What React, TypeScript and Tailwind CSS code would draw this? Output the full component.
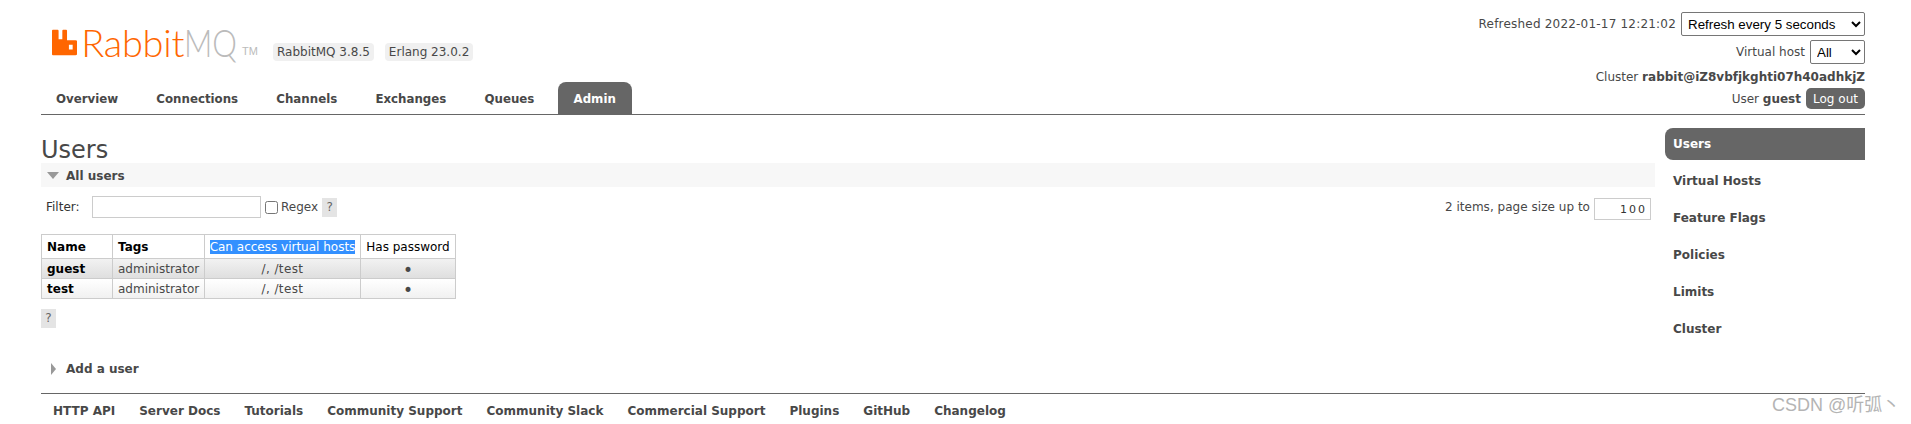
import React from 'react';

const tabs = ['Overview', 'Connections', 'Channels', 'Exchanges', 'Queues'];
const side = ['Virtual Hosts', 'Feature Flags', 'Policies', 'Limits', 'Cluster'];
const footer = ['HTTP API', 'Server Docs', 'Tutorials', 'Community Support', 'Community Slack', 'Commercial Support', 'Plugins', 'GitHub', 'Changelog'];

const Help = () => (
  <span className="inline-block w-[15px] h-[19px] bg-[#e4e4e4] text-center leading-[19px] text-[#666]">?</span>
);

const Logo = () => (
  <div className="flex items-end w-[206px]">
    <svg width="27" height="27" viewBox="0 0 27 27" className="mb-[1px]">
      <path
        fillRule="evenodd"
        fill="#ff6600"
        d="M0 1 Q0 0 1 0 H6 Q7 0 7 1 V10 H11 V1 Q11 0 12 0 H15 Q16 0 16 1 V11 H25 Q27 11 27 13 V25 Q27 27 25 27 H1 Q0 27 0 26 Z M18 16 V21 H22 V16 Z"
      />
    </svg>
    <span className="ml-[4px] text-[38px] leading-[30px] font-light tracking-[-0.3px] text-[#ff6600] font-['Lato',sans-serif]">Rabbit</span>
    <span className="inline-block w-[56px] origin-left scale-x-[0.82] text-[38px] leading-[30px] font-light text-[#bbbbbb] font-['Lato',sans-serif]">MQ</span>
    <span className="ml-[2px] mb-[1px] text-[11px] leading-[10px] text-[#bbbbbb] font-['Liberation_Sans',sans-serif]">TM</span>
  </div>
);

export default function App() {
  return (
    <div className="relative w-[1911px] h-[424px] overflow-hidden bg-white text-[12px] text-[#484848] font-['DejaVu_Sans',sans-serif]">
      {/* header */}
      <header className="ml-[41px] mr-[46px] h-[115px] border-b border-[#666] flex justify-between">
        <div className="flex flex-col">
          <div className="flex items-end mt-[27px] ml-[11px]">
            <Logo />
            <div className="flex gap-[11px] ml-[15px] mb-[-4px]">
              <span className="bg-[#f0f0f0] rounded-[4px] px-[4px] h-[18px] leading-[18px]">RabbitMQ 3.8.5</span>
              <span className="bg-[#f0f0f0] rounded-[4px] px-[4px] h-[18px] leading-[18px]">Erlang 23.0.2</span>
            </div>
          </div>
          <nav className="flex mt-auto font-bold text-[11.8px]">
            {tabs.map((t) => (
              <a key={t} className="px-[15px] mr-[8.2px] h-[32px] leading-[35px]">{t}</a>
            ))}
            <a className="px-[16px] h-[32px] leading-[35px] bg-[#666] text-white rounded-t-[8px]">Admin</a>
          </nav>
        </div>
        <div className="flex flex-col items-end pt-[12px]">
          <div className="flex items-center gap-[5px] h-[24px]">
            <span className="tracking-[0.2px]">Refreshed 2022-01-17 12:21:02</span>
            <select defaultValue="5" className="w-[184px] h-[24px] border border-[#767676] rounded-[2px] text-[13.33px] text-black pl-[2px] font-['Liberation_Sans',sans-serif]">
              <option value="5">Refresh every 5 seconds</option>
            </select>
          </div>
          <div className="flex items-center gap-[5px] h-[24px] mt-[4px]">
            <span>Virtual host</span>
            <select defaultValue="all" className="w-[55px] h-[24px] border border-[#767676] rounded-[2px] text-[13.33px] text-black pl-[2px] font-['Liberation_Sans',sans-serif]">
              <option value="all">All</option>
            </select>
          </div>
          <div className="mt-[5px] h-[16px] leading-[16px]">
            Cluster <b>rabbit@iZ8vbfjkghti07h40adhkjZ</b>
          </div>
          <div className="flex items-center gap-[5px] mt-[3px]">
            <span>User <b>guest</b></span>
            <button className="w-[59px] h-[21px] bg-[#666] text-white rounded-[5px] text-[12px]">Log out</button>
          </div>
        </div>
      </header>

      {/* main */}
      <div className="ml-[41px] mr-[46px] h-[278px] flex gap-[10px]">
        <main className="w-[1614px]">
          <h1 className="mt-[22px] text-[24px] leading-[26px] text-[#484848]">Users</h1>
          <div className="h-[24px] pt-[1px] bg-[#f7f7f7] flex items-center font-bold">
            <span className="ml-[6px] mr-[7px] w-0 h-0 border-x-[6px] border-x-transparent border-t-[7px] border-t-[#999]" />
            All users
          </div>
          <div className="flex items-center h-[22px] mt-[9px]">
            <span className="ml-[5px] w-[46px] text-[#333]">Filter:</span>
            <input className="w-[169px] h-[22px] border border-[#ccc] outline-none" />
            <input type="checkbox" className="ml-[4px] w-[13px] h-[13px]" />
            <span className="ml-[3px]">Regex</span>
            <span className="ml-[4px] flex"><Help /></span>
            <span className="ml-auto mr-[4px] tracking-[0.03px]">2 items, page size up to</span>
            <input defaultValue="100" className="w-[57px] h-[22px] mt-[4px] mr-[4px] border border-[#ccc] text-right pr-[3px] text-[11px] tracking-[2px] text-[#333] outline-none" />
          </div>
          <table className="mt-[16px] border-collapse text-center">
            <thead>
              <tr className="h-[24px] text-black">
                <th className="w-[71px] border border-[#ccc] text-left pl-[5px]">Name</th>
                <th className="w-[92px] border border-[#ccc] text-left pl-[5px]">Tags</th>
                <th className="w-[156px] border border-[#ccc] font-normal">
                  <span className="bg-[#3390ff] text-white">Can access virtual hosts</span>
                </th>
                <th className="w-[95px] border border-[#ccc] font-normal">Has password</th>
              </tr>
            </thead>
            <tbody>
              <tr className="h-[20px] bg-gradient-to-b from-[#f2f2f2] to-[#dedede]">
                <td className="border border-[#ccc] text-left pl-[5px] font-bold text-black">guest</td>
                <td className="border border-[#ccc] text-left pl-[5px]">administrator</td>
                <td className="border border-[#ccc] tracking-[0.4px]">/, /test</td>
                <td className="border border-[#ccc] text-[17px] leading-[15px] pt-[3px]">•</td>
              </tr>
              <tr className="h-[20px] bg-gradient-to-b from-white to-[#f0f0f0]">
                <td className="border border-[#ccc] text-left pl-[5px] font-bold text-black">test</td>
                <td className="border border-[#ccc] text-left pl-[5px]">administrator</td>
                <td className="border border-[#ccc] tracking-[0.4px]">/, /test</td>
                <td className="border border-[#ccc] text-[17px] leading-[15px] pt-[3px]">•</td>
              </tr>
            </tbody>
          </table>
          <div className="mt-[10px] h-[20px]"><Help /></div>
          <div className="mt-[31px] flex items-center font-bold">
            <span className="ml-[10px] mr-[10px] w-0 h-0 border-y-[6px] border-y-transparent border-l-[5px] border-l-[#999]" />
            Add a user
          </div>
        </main>
        <aside className="w-[200px] mt-[13px] font-bold">
          <div className="h-[32px] leading-[32px] pl-[8px] bg-[#666] text-white rounded-l-[8px]">Users</div>
          <div className="flex flex-col mt-[13px] gap-[21px] pl-[8px]">
            {side.map((s) => (
              <a key={s} className="h-[16px] leading-[16px]">{s}</a>
            ))}
          </div>
        </aside>
      </div>

      {/* footer */}
      <footer className="ml-[41px] mr-[46px] border-t border-[#666] flex gap-[24px] pl-[12px] pt-[8px] font-bold">
        {footer.map((f) => (
          <a key={f}>{f}</a>
        ))}
      </footer>

      <span className="absolute left-[1772px] top-[395px] text-[18px] leading-[20px] text-[#b4b4b4] font-['Liberation_Sans','Noto_Sans_CJK_SC',sans-serif]">CSDN @听弧丶</span>
    </div>
  );
}
